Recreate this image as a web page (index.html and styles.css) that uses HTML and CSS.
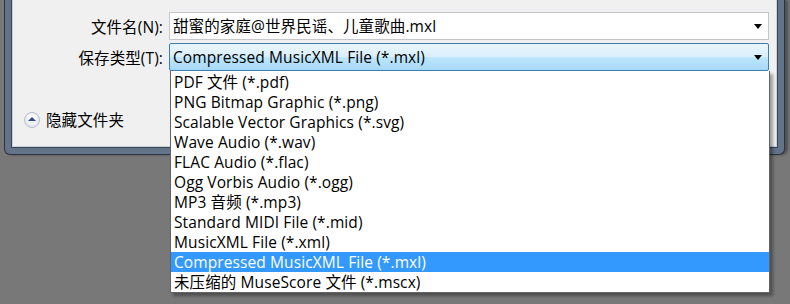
FILE: index.html
```html
<!DOCTYPE html>
<html lang="zh-CN">
<head>
    <meta charset="UTF-8">
    <title>保存类型</title>
    <link rel="stylesheet" href="styles.css">
</head>
<body>
    <div class="dialog">
        <div class="client">
            <div class="row row-name">
                <label class="label">文件名(N):</label>
                <div class="field">
                    <span class="value">甜蜜的家庭@世界民谣、儿童歌曲.mxl</span>
                    <span class="arrow"></span>
                </div>
            </div>
            <div class="row row-type">
                <label class="label">保存类型(T):</label>
                <div class="field combo">
                    <span class="value">Compressed MusicXML File (*.mxl)</span>
                    <span class="arrow"></span>
                </div>
            </div>
            <div class="folders">
                <span class="toggle"></span>
                <span>隐藏文件夹</span>
            </div>
        </div>
    </div>

    <ul class="droplist">
        <li>PDF 文件 (*.pdf)</li>
        <li>PNG Bitmap Graphic (*.png)</li>
        <li>Scalable Vector Graphics (*.svg)</li>
        <li>Wave Audio (*.wav)</li>
        <li>FLAC Audio (*.flac)</li>
        <li>Ogg Vorbis Audio (*.ogg)</li>
        <li>MP3 音频 (*.mp3)</li>
        <li>Standard MIDI File (*.mid)</li>
        <li>MusicXML File (*.xml)</li>
        <li class="selected">Compressed MusicXML File (*.mxl)</li>
        <li>未压缩的 MuseScore 文件 (*.mscx)</li>
    </ul>
</body>
</html>
```

FILE: styles.css
```css
body {
    margin: 0;
    width: 790px;
    height: 304px;
    overflow: hidden;
    background: #787878;
    font-family: "Open Sans", "Noto Sans CJK SC", sans-serif;
    font-size: 15.5px;
    letter-spacing: 0.1px;
    color: #000;
    position: relative;
}
.dialog {
    width: 767px;
    margin-left: 4px;
    background: #62738a;
    border: 1px solid #2b3440;
    border-top: none;
    border-radius: 0 0 6px 6px;
    padding: 0 6px 6px 6px;
    box-shadow: 3px 0 3px rgba(0, 0, 0, 0.35);
}
.client {
    height: 148px;
    box-sizing: border-box;
    background: #f0f0f0;
    border: 1px solid #3a4756;
    border-top: none;
    box-shadow: inset 1px 0 0 #c9d1db, inset -1px 0 0 #c9d1db, inset 0 -1px 0 #c9d1db;
    padding-top: 12px;
}
.row {
    display: flex;
    align-items: center;
    height: 28px;
}
.row-type {
    margin-top: 3px;
}
.label {
    width: 151px;
    text-align: right;
    padding-right: 6px;
    flex: none;
}
.field {
    width: 600px;
    height: 28px;
    box-sizing: border-box;
    background: #fff;
    border: 1px solid #c4c8cc;
    display: flex;
    align-items: center;
    justify-content: space-between;
    padding: 0 6px 0 3px;
}
.combo {
    border-color: #3c7fb1;
    background: linear-gradient(#eaf6fd 0%, #d9effc 48%, #bee6fd 52%, #a7d9f5 100%);
    border-radius: 2px;
}
.value {
    white-space: nowrap;
    line-height: 20px;
}
.arrow {
    width: 0;
    height: 0;
    border-left: 4px solid transparent;
    border-right: 4px solid transparent;
    border-top: 5px solid #000;
}
.folders {
    display: flex;
    align-items: center;
    gap: 6px;
    margin-top: 37px;
    padding-left: 12px;
}
.toggle {
    width: 14px;
    height: 14px;
    border-radius: 50%;
    border: 1px solid #b6bfcc;
    background: radial-gradient(circle at 50% 40%, #ffffff 0%, #e9edf3 60%, #d4dbe5 100%);
    position: relative;
}
.toggle::after {
    content: "";
    position: absolute;
    left: 3px;
    top: 4px;
    border-left: 4px solid transparent;
    border-right: 4px solid transparent;
    border-bottom: 4px solid #2c4a8a;
}
.droplist {
    position: absolute;
    left: 170px;
    top: 71px;
    width: 600px;
    margin: 0;
    padding: 1px 0 0 0;
    list-style: none;
    background: #fff;
    border: 1px solid #646464;
    border-top: none;
    box-sizing: border-box;
    box-shadow: 3px 3px 3px rgba(0, 0, 0, 0.35);
}
.droplist li {
    height: 20px;
    line-height: 20px;
    padding-left: 3px;
    white-space: nowrap;
}
.droplist li.selected {
    background: #3399ff;
    color: #fff;
}
```
